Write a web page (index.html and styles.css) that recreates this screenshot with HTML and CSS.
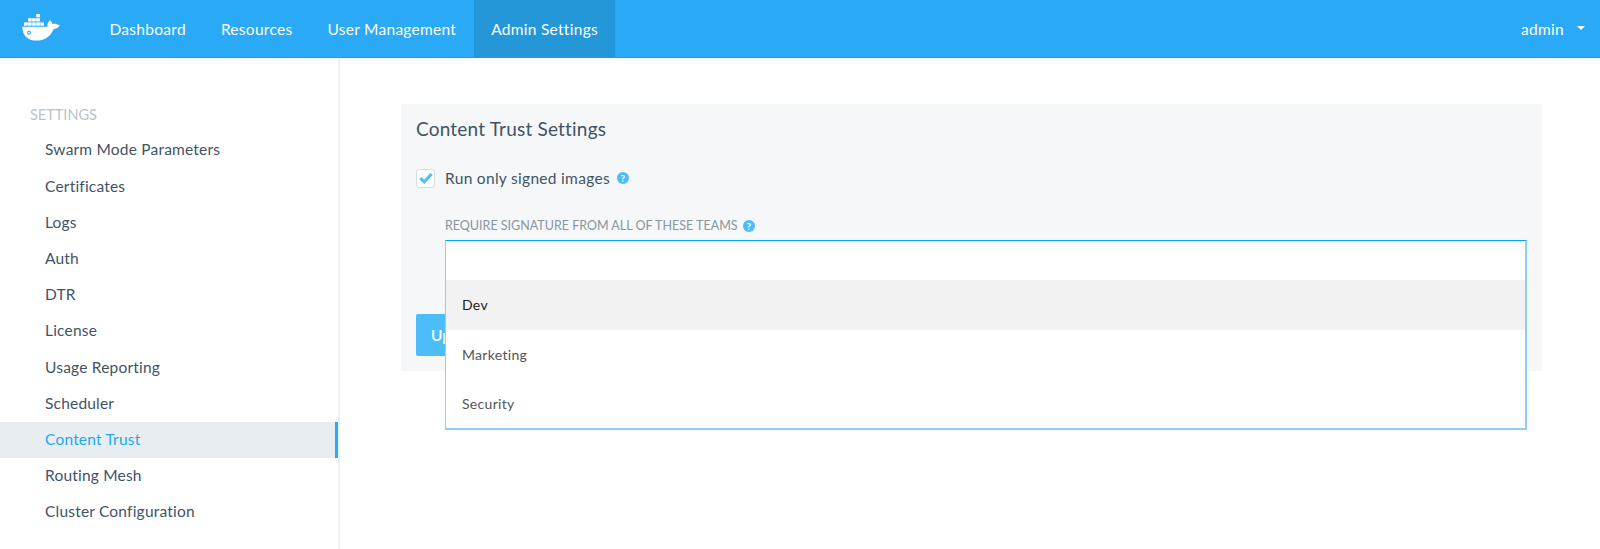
FILE: index.html
```html
<!DOCTYPE html>
<html lang="en">
<head>
<meta charset="utf-8">
<title>Admin Settings</title>
<link rel="stylesheet" href="styles.css">
</head>
<body>
<header class="topbar">
  <div class="logo-box">
    <svg class="logo" viewBox="0 0 38 27" width="38" height="27" aria-hidden="true">
      <g fill="#fff">
        <rect x="14.2" y="0" width="3.7" height="3.3"/>
        <rect x="6" y="4.2" width="3.7" height="3.3"/><rect x="10.1" y="4.2" width="3.7" height="3.3"/><rect x="14.2" y="4.2" width="3.7" height="3.3"/>
        <rect x="2" y="8.4" width="3.7" height="3.3"/><rect x="6" y="8.4" width="3.7" height="3.3"/><rect x="10.1" y="8.4" width="3.7" height="3.3"/><rect x="14.2" y="8.4" width="3.7" height="3.3"/><rect x="18.3" y="8.4" width="3.7" height="3.3"/>
        <path d="M0.3 12.7H25.6C25.2 10.8 25.6 8.6 27 7.2L28 6.3C29.2 7.2 30 8.5 30.3 10C32.5 9.6 35.3 10 37.8 11.6C35.8 14.4 33.6 15 31.5 15.2C29 21.6 23.3 26.6 14.5 26.6C6 26.6 0.2 21.3 0.3 12.7Z"/>
      </g>
      <circle cx="7" cy="18.7" r="2" fill="#2aa9f6"/>
      <circle cx="7" cy="18.7" r="0.9" fill="#fff"/>
    </svg>
  </div>
  <nav class="topnav">
    <a class="topnav-item">Dashboard</a>
    <a class="topnav-item">Resources</a>
    <a class="topnav-item">User Management</a>
    <a class="topnav-item is-active">Admin Settings</a>
  </nav>
  <div class="user">
    <span>admin</span>
    <span class="caret"></span>
  </div>
</header>
<div class="layout">
  <aside class="sidebar">
    <h2 class="sidebar-title">SETTINGS</h2>
    <ul class="side-list">
      <li class="side-item">Swarm Mode Parameters</li>
      <li class="side-item">Certificates</li>
      <li class="side-item">Logs</li>
      <li class="side-item">Auth</li>
      <li class="side-item">DTR</li>
      <li class="side-item">License</li>
      <li class="side-item">Usage Reporting</li>
      <li class="side-item">Scheduler</li>
      <li class="side-item is-active">Content Trust</li>
      <li class="side-item">Routing Mesh</li>
      <li class="side-item">Cluster Configuration</li>
    </ul>
  </aside>
  <main class="content">
    <section class="panel">
      <h1 class="panel-title">Content Trust Settings</h1>
      <div class="check-row">
        <span class="checkbox">
          <svg viewBox="0 0 14 12" width="14" height="12" aria-hidden="true"><path d="M1.4 6.2L5.2 9.8L12.6 2" fill="none" stroke="#4dbdfa" stroke-width="3"/></svg>
        </span>
        <span class="check-label">Run only signed images</span>
        <span class="help">?</span>
      </div>
      <div class="field">
        <div class="field-label">REQUIRE SIGNATURE FROM ALL OF THESE TEAMS <span class="help">?</span></div>
        <div class="select">
          <div class="select-input"></div>
          <ul class="menu">
            <li class="menu-item is-focused">Dev</li>
            <li class="menu-item">Marketing</li>
            <li class="menu-item">Security</li>
          </ul>
        </div>
      </div>
      <button class="btn">Update</button>
    </section>
  </main>
</div>
</body>
</html>
```

FILE: styles.css
```css
* { box-sizing: border-box; }
html, body { margin: 0; padding: 0; height: 549px; overflow: hidden; background: #fff; }
body { font-family: Lato, "Open Sans", sans-serif; font-size: 15px; color: #3f5466; }
ul { list-style: none; margin: 0; padding: 0; }
h1, h2 { margin: 0; font-weight: 400; }

.topbar { display: flex; align-items: stretch; height: 58px; background: #2aa9f6; border-bottom: 1px solid #1c9be6; color: #fff; }
.logo-box { width: 92px; display: flex; align-items: flex-start; padding: 14px 0 0 22px; }
.logo { display: block; }
.topnav { display: flex; align-items: stretch; }
.topnav-item { display: flex; align-items: center; padding: 0 17.5px; font-size: 15.5px; letter-spacing: 0.28px; }
.topnav-item.is-active { background: #2497d9; }
.user { margin-left: auto; display: flex; align-items: center; gap: 13px; padding-right: 15px; font-size: 15.5px; letter-spacing: 0.3px; }
.caret { width: 0; height: 0; border-left: 4px solid transparent; border-right: 4px solid transparent; border-top: 4px solid #fff; margin-top: -2px; }

.layout { display: flex; height: 491px; }
.sidebar { width: 340px; flex: none; border-right: 2px solid #eff1f3; padding-top: 47px; }
.sidebar-title { font-size: 14.5px; line-height: 20px; color: #b9c4cc; padding-left: 30px; margin-bottom: 7.4px; }
.side-item { height: 36.2px; line-height: 35px; padding-left: 45px; font-size: 15.5px; letter-spacing: 0.2px; }
.side-item.is-active { background: #e8edf1; color: #1fa6f4; border-right: 3px solid #2aa9f6; }

.content { flex: 1; padding: 46px 58px 0 61px; }
.panel { background: #f6f7f9; height: 267px; padding: 14px 15px 15px; }
.panel-title { font-size: 19px; line-height: 22px; letter-spacing: 0.2px; color: #3f5466; }
.check-row { display: flex; align-items: center; margin-top: 28px; height: 20px; }
.checkbox { width: 19px; height: 19px; flex: none; background: #fff; border: 1px solid #d6dce0; border-radius: 3px; display: flex; align-items: center; justify-content: center; }
.check-label { margin-left: 10px; font-size: 15.5px; letter-spacing: 0.3px; }
.help { display: inline-block; width: 12px; height: 12px; line-height: 12px; border-radius: 50%; background: #4dbdfa; color: #fff; font-size: 10px; font-weight: 700; text-align: center; letter-spacing: 0; vertical-align: 0; }
.check-row .help { margin-left: 7px; }
.field { margin: 29px 0 0 29px; }
.field-label { font-size: 12.5px; line-height: 18px; color: #87969f; margin-bottom: 5px; letter-spacing: 0; }
.field-label .help { margin-left: 2px; }
.select { position: relative; height: 40px; margin-bottom: 34px; }
.select-input { height: 40px; background: #fff; border: 1px solid #8fcdf9; border-width: 1px 2px 0 1px; border-top-color: #00a7f7; }
.menu { position: absolute; top: 40px; left: 0; right: 0; background: #fff; border: 1px solid #8fcdf9; border-width: 0 2px 2px 1px; }
.menu-item { height: 49px; line-height: 49px; padding-left: 16px; font-size: 14px; letter-spacing: 0.3px; color: #555; }
.menu-item.is-focused { height: 50px; line-height: 50px; background: #f2f2f2; color: #222; }
.btn { display: block; width: 90px; height: 42px; border: 0; border-radius: 2px; background: #4dbdfa; color: #fff; font: 600 15.5px Lato, sans-serif; text-align: left; padding-left: 15px; }
```
